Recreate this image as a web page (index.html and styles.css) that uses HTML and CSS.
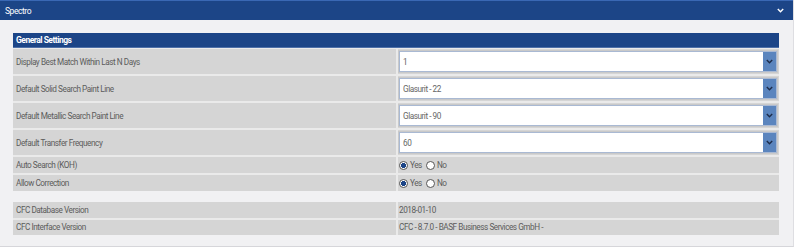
FILE: index.html
```html
<!DOCTYPE html>
<html lang="en">
<head>
  <meta charset="UTF-8">
  <title>Spectro</title>
  <link rel="stylesheet" href="styles.css">
</head>
<body>
  <div class="panel">
    <div class="panel-head">
      <span>Spectro</span>
      <svg class="head-chevron" width="7" height="5" viewBox="0 0 7 5"><polyline points="0.8,1 3.5,3.8 6.2,1" fill="none" stroke="#fff" stroke-width="1.4"/></svg>
    </div>
    <div class="panel-body">
      <div class="section-title">General Settings</div>
      <div class="grid">
        <div class="cell label tall">Display Best Match Within Last N Days</div>
        <div class="cell tall">
          <div class="select">
            <select><option>1</option></select>
            <span class="select-btn"><svg width="7" height="5" viewBox="0 0 7 5"><polyline points="0.8,1 3.5,3.8 6.2,1" fill="none" stroke="#1d2c4a" stroke-width="1.4"/></svg></span>
          </div>
        </div>

        <div class="cell label tall">Default Solid Search Paint Line</div>
        <div class="cell tall">
          <div class="select">
            <select><option>Glasurit - 22</option></select>
            <span class="select-btn"><svg width="7" height="5" viewBox="0 0 7 5"><polyline points="0.8,1 3.5,3.8 6.2,1" fill="none" stroke="#1d2c4a" stroke-width="1.4"/></svg></span>
          </div>
        </div>

        <div class="cell label tall">Default Metallic Search Paint Line</div>
        <div class="cell tall">
          <div class="select">
            <select><option>Glasurit - 90</option></select>
            <span class="select-btn"><svg width="7" height="5" viewBox="0 0 7 5"><polyline points="0.8,1 3.5,3.8 6.2,1" fill="none" stroke="#1d2c4a" stroke-width="1.4"/></svg></span>
          </div>
        </div>

        <div class="cell label tall">Default Transfer Frequency</div>
        <div class="cell tall">
          <div class="select">
            <select><option>60</option></select>
            <span class="select-btn"><svg width="7" height="5" viewBox="0 0 7 5"><polyline points="0.8,1 3.5,3.8 6.2,1" fill="none" stroke="#1d2c4a" stroke-width="1.4"/></svg></span>
          </div>
        </div>

        <div class="cell label short">Auto Search (KOH)</div>
        <div class="cell short radios">
          <label><input type="radio" name="koh" checked> Yes</label>
          <label><input type="radio" name="koh"> No</label>
        </div>

        <div class="cell label short">Allow Correction</div>
        <div class="cell short radios">
          <label><input type="radio" name="corr" checked> Yes</label>
          <label><input type="radio" name="corr"> No</label>
        </div>
      </div>

      <div class="grid versions">
        <div class="cell label info">CFC Database Version</div>
        <div class="cell value info">2018-01-10</div>
        <div class="cell label info">CFC Interface Version</div>
        <div class="cell value info">CFC - 8.7.0 - BASF Business Services GmbH -</div>
      </div>
    </div>
  </div>
</body>
</html>
```

FILE: styles.css
```css
body { margin: 0; background: #fff; font-family: Roboto, "Liberation Sans", Arial, sans-serif; font-size: 8.2px; letter-spacing: -0.45px; color: #5c5c5c; }
.panel { border-right: 1px solid #dedee2; border-bottom: 1px solid #d6d6da; }
.panel-head { height: 19px; background: #1c4587; border-top: 1px solid #3a68b4; color: #fff; font-size: 8.5px; display: flex; align-items: center; justify-content: space-between; padding: 0 9px 0 5px; }
.panel-body { background: #f1f1f3; padding: 13px 14px 11px 13px; }
.section-title { height: 14px; line-height: 14px; background: #1c4587; border-bottom: 1px solid #4e70a8; color: #fff; font-weight: bold; font-size: 8.5px; letter-spacing: -0.5px; padding-left: 3px; }
.grid { display: grid; grid-template-columns: 383px 1fr; gap: 2px; background: #eaeaea; padding-top: 1px; }
.cell { background: #d5d5d5; display: flex; align-items: center; }
.label { padding-left: 3px; }
.tall { height: 25px; }
.short { height: 16px; }
.info { height: 15.5px; }
.value { padding-left: 1px; }
.versions { margin-top: 11px; padding-top: 0; }
.select { display: flex; height: 19px; width: 376px; margin-left: 1px; border: 1px solid #a9b9d3; background: #fff; box-shadow: 0 0 0 1px #c9c9c9; }
.select select { flex: 1; appearance: none; -webkit-appearance: none; border: 0; outline: 0; background: #fff; font-family: inherit; font-size: 8.2px; letter-spacing: -0.45px; color: #666; padding: 0 0 0 3px; margin: 0; }
.select-btn { width: 13px; background: #5b85be; display: flex; align-items: center; justify-content: center; }
.radios { gap: 4px; padding-left: 1px; }
.radios label { display: flex; align-items: center; gap: 2px; }
.radios input { appearance: none; -webkit-appearance: none; width: 9px; height: 9px; margin: 0; border: 1px solid #555; border-radius: 50%; background: #fff; box-sizing: border-box; }
.radios input:checked { background: radial-gradient(circle, #1c4587 2.3px, #fff 2.8px); }
```
